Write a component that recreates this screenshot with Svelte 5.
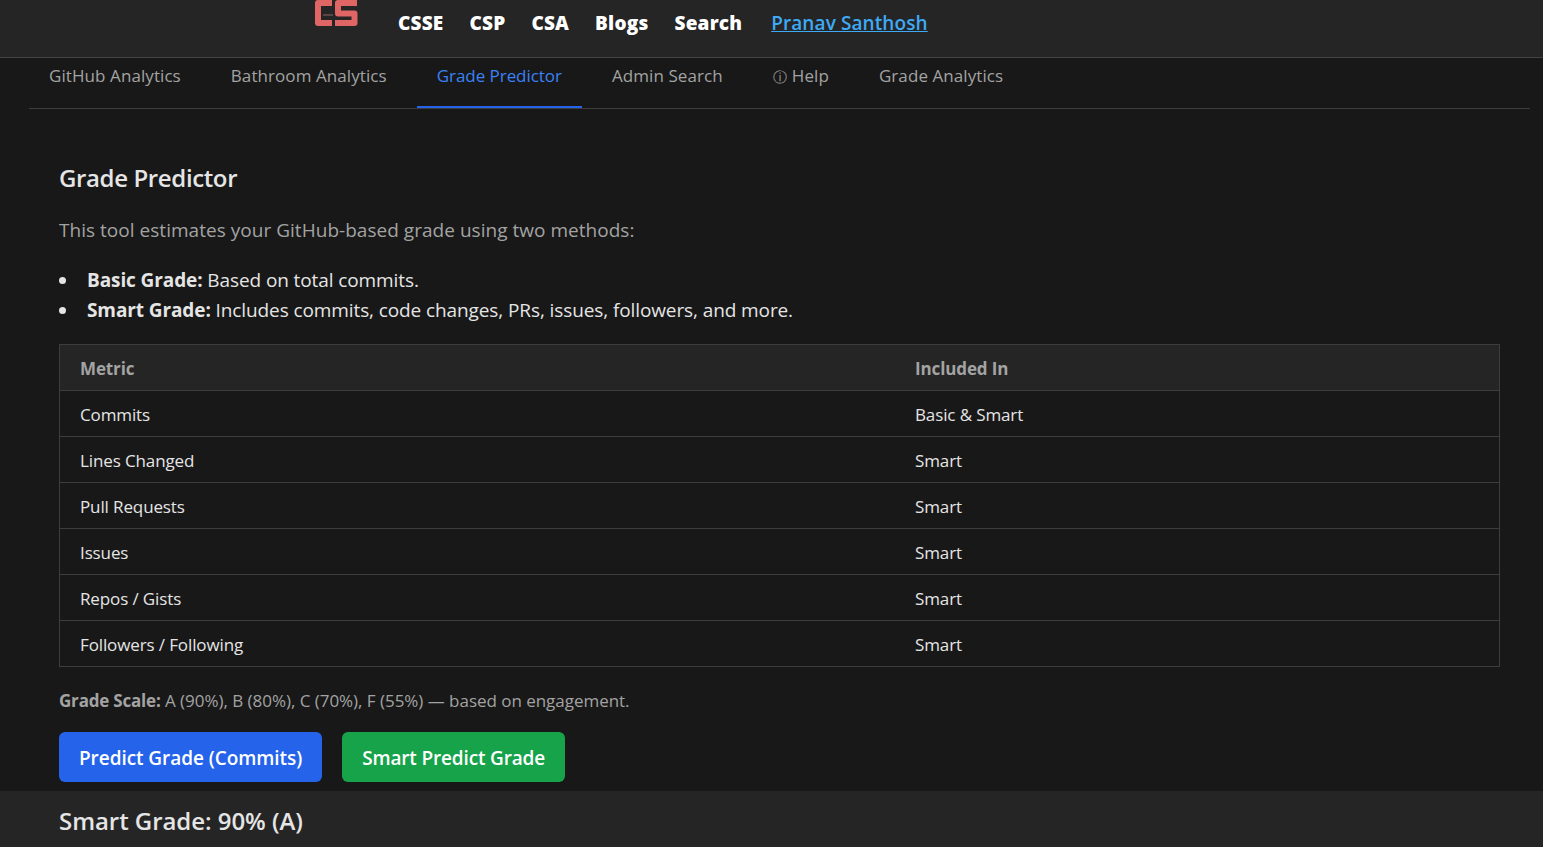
<script lang="ts">
    const links = ["CSSE", "CSP", "CSA", "Blogs", "Search"];
    const tabs = [
        { label: "GitHub Analytics" },
        { label: "Bathroom Analytics" },
        { label: "Grade Predictor", active: true },
        { label: "Admin Search" },
        { label: "Help", icon: true },
        { label: "Grade Analytics" }
    ];
    const rows = [
        ["Commits", "Basic & Smart"],
        ["Lines Changed", "Smart"],
        ["Pull Requests", "Smart"],
        ["Issues", "Smart"],
        ["Repos / Gists", "Smart"],
        ["Followers / Following", "Smart"]
    ];
</script>

<header class="topbar">
    <svg class="logo" viewBox="0 0 44 28" width="44" height="28" aria-label="CS logo">
        <path d="M18 3 H4 V23 H18" fill="none" stroke="#e06666" stroke-width="6" stroke-linejoin="round" />
        <path d="M43 3 H24 V13.5 H40.5 V23 H21" fill="none" stroke="#e06666" stroke-width="6" stroke-linejoin="round" />
        <rect x="9" y="14" width="10" height="2" fill="#5a4545" />
    </svg>
    <nav class="site-links">
        {#each links as link}
            <a href="#top" class="site-link">{link}</a>
        {/each}
        <a href="#top" class="user-link">Pranav Santhosh</a>
    </nav>
</header>

<div class="page">
    <div class="tabs">
        {#each tabs as tab}
            <button class="tab" class:active={tab.active}>
                {#if tab.icon}<span class="info">ⓘ</span>{/if}{tab.label}
            </button>
        {/each}
    </div>

    <main class="panel">
        <h2>Grade Predictor</h2>
        <p class="intro">This tool estimates your GitHub-based grade using two methods:</p>
        <ul>
            <li><strong>Basic Grade:</strong> Based on total commits.</li>
            <li><strong>Smart Grade:</strong> Includes commits, code changes, PRs, issues, followers, and more.</li>
        </ul>

        <table>
            <thead>
                <tr><th>Metric</th><th>Included In</th></tr>
            </thead>
            <tbody>
                {#each rows as row}
                    <tr><td>{row[0]}</td><td>{row[1]}</td></tr>
                {/each}
            </tbody>
        </table>

        <p class="scale"><strong>Grade Scale:</strong> A (90%), B (80%), C (70%), F (55%) — based on engagement.</p>

        <div class="actions">
            <button class="btn blue">Predict Grade (Commits)</button>
            <button class="btn green">Smart Predict Grade</button>
        </div>
    </main>
</div>

<section class="result">
    <h3>Smart Grade: 90% (A)</h3>
</section>

<style>
    :global(body) {
        background: #181818;
        color: #e5e5e5;
        font-family: "Open Sans", "Noto Sans", sans-serif;
        height: 847px;
        overflow: hidden;
    }

    .topbar {
        box-sizing: border-box;
        height: 58px;
        background: #252525;
        border-bottom: 1px solid #444;
        display: flex;
        align-items: flex-start;
        padding-left: 314px;
        overflow: hidden;
    }

    .logo {
        flex: none;
    }

    .site-links {
        display: flex;
        align-items: center;
        height: 46px;
        margin-left: 40px;
        gap: 26px;
    }

    .site-link {
        color: #fff;
        font-weight: 800;
        font-size: 19px;
        letter-spacing: 0.2px;
        text-decoration: none;
    }

    .user-link {
        color: #3eaaf5;
        font-weight: 600;
        font-size: 19px;
        letter-spacing: 0.1px;
        margin-left: 3px;
    }

    .page {
        padding: 0 13px 0 29px;
    }

    .tabs {
        display: flex;
        gap: 10px;
        height: 50px;
        border-bottom: 1px solid #3d3d3d;
    }

    .tab {
        all: unset;
        height: 50px;
        box-sizing: border-box;
        padding: 0 20px 12px;
        font-size: 17px;
        line-height: 24px;
        letter-spacing: 0.08px;
        font-weight: 500;
        color: #a3a3a3;
        border-bottom: 2px solid transparent;
    }

    .tab.active {
        color: #3b82f6;
        letter-spacing: -0.05px;
        border-bottom-color: #2563eb;
    }

    .info {
        font-size: 14px;
        margin-right: 5px;
    }

    .panel {
        padding: 37px 30px 0;
    }

    h2 {
        margin: 0;
        font-size: 24px;
        line-height: 64px;
        height: 64px;
        font-weight: 600;
        letter-spacing: -0.37px;
    }

    .intro {
        margin: 6px 0 0;
        font-size: 19px;
        line-height: 28px;
        letter-spacing: 0.03px;
        color: #a3a3a3;
    }

    ul {
        margin: 21px 0 0;
        padding-left: 28px;
        list-style: none;
        font-size: 19px;
        line-height: 30px;
        letter-spacing: -0.1px;
    }

    li {
        position: relative;
    }

    li::before {
        content: "";
        position: absolute;
        left: -28px;
        top: 12px;
        width: 7px;
        height: 7px;
        border-radius: 50%;
        background: #e5e5e5;
    }

    table {
        width: 100%;
        margin-top: 19px;
        border-collapse: collapse;
        table-layout: fixed;
        font-size: 17px;
        letter-spacing: -0.12px;
    }

    th, td {
        border: 1px solid #3d3d3d;
        border-left: none;
        border-right: none;
        text-align: left;
        height: 43px;
        padding: 2px 20px 0;
        box-sizing: content-box;
    }

    th:first-child, td:first-child {
        border-left: 1px solid #3d3d3d;
        width: 795px;
    }

    th:last-child, td:last-child {
        border-right: 1px solid #3d3d3d;
    }

    th {
        background: #252525;
        color: #a3a3a3;
        font-weight: 700;
    }

    .scale {
        margin: 22px 0 0;
        font-size: 17px;
        line-height: 24px;
        letter-spacing: -0.03px;
        color: #a3a3a3;
    }

    .scale strong {
        letter-spacing: -0.2px;
    }

    .actions {
        display: flex;
        gap: 20px;
        margin-top: 19px;
    }

    .btn {
        all: unset;
        height: 50px;
        padding: 0 20px;
        border-radius: 6px;
        color: #fff;
        font-size: 19px;
        font-weight: 600;
        letter-spacing: -0.06px;
        line-height: 52px;
    }

    .blue {
        background: #2563eb;
    }

    .green {
        background: #16a34a;
        letter-spacing: -0.16px;
    }

    .result {
        margin-top: 9px;
        background: #252525;
        padding: 0 59px;
        height: 56px;
    }

    h3 {
        margin: 0;
        font-size: 24px;
        line-height: 60px;
        font-weight: 600;
        letter-spacing: -0.05px;
    }
</style>
